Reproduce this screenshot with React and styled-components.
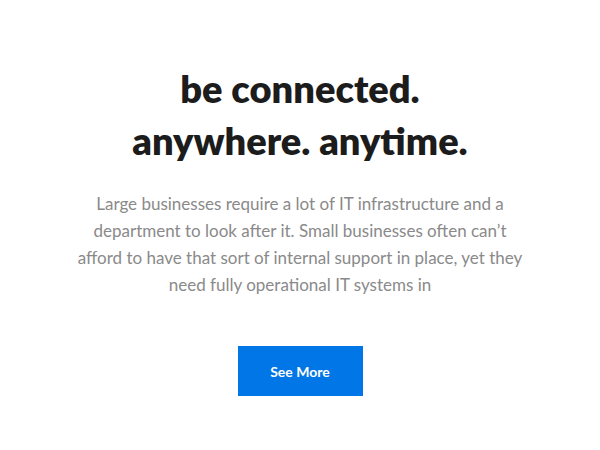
import React from "react";
import styled, { createGlobalStyle } from "styled-components";

const Global = createGlobalStyle`
  html, body { margin: 0; padding: 0; background: #fff; }
  body { font-family: "Lato", "Noto Sans", sans-serif; }
`;

const Section = styled.section`
  width: 600px;
  height: 450px;
  display: flex;
  flex-direction: column;
  align-items: center;
  padding-top: 62px;
  box-sizing: border-box;
`;

const Title = styled.h1`
  margin: 0;
  font-size: 38px;
  line-height: 52px;
  font-weight: 800;
  color: #1c1c1c;
  text-align: center;
`;

const Text = styled.p`
  margin: 24px 0 0;
  width: 480px;
  font-size: 17px;
  line-height: 27px;
  color: #8a8a8a;
  text-align: center;
`;

const Button = styled.a`
  margin-top: 48px;
  width: 125px;
  height: 50px;
  display: flex;
  align-items: center;
  justify-content: center;
  background: #0176e6;
  color: #fff;
  font-size: 14px;
  font-weight: 700;
  text-decoration: none;
`;

export default function App() {
  return (
    <>
      <Global />
      <Section>
        <Title>
          be connected.
          <br />
          anywhere. anytime.
        </Title>
        <Text>
          Large businesses require a lot of IT infrastructure and a<br />
          department to look after it. Small businesses often can’t<br />
          afford to have that sort of internal support in place, yet they<br />
          need fully operational IT systems in
        </Text>
        <Button href="#">See More</Button>
      </Section>
    </>
  );
}
